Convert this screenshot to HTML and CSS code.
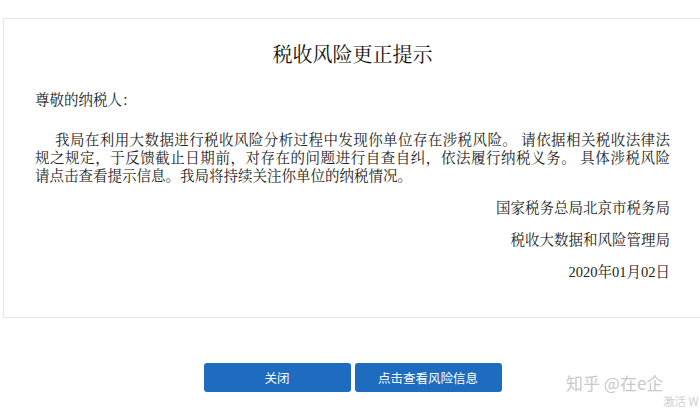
FILE: index.html
```html
<!DOCTYPE html>
<html lang="zh-CN">
<head>
<meta charset="utf-8">
<title>税收风险更正提示</title>
<link rel="stylesheet" href="styles.css">
</head>
<body>
<div class="page">
  <div class="card">
    <h1 class="title">税收风险更正提示</h1>
    <p class="greeting">尊敬的纳税人：</p>
    <div class="body">
      <span class="line line-first jline">我局在利用大数据进行税收风险分析过程中发现你单位存在涉税风险。 请依据相关税收法律法</span>
      <span class="line jline">规之规定，于反馈截止日期前，对存在的问题进行自查自纠，依法履行纳税义务。 具体涉税风险</span>
      <span class="line">请点击查看提示信息。我局将持续关注你单位的纳税情况。</span>
    </div>
    <p class="sign">国家税务总局北京市税务局</p>
    <p class="sign">税收大数据和风险管理局</p>
    <p class="sign">2020年01月02日</p>
  </div>
  <div class="actions">
    <button class="btn">关闭</button>
    <button class="btn">点击查看风险信息</button>
  </div>
  <div class="watermark">知乎 @在e企</div>
  <div class="activate">激活 W</div>
</div>
</body>
</html>
```
FILE: styles.css
```css
html, body {
  margin: 0;
  padding: 0;
  background: #fff;
  overflow: hidden;
}
body {
  font-family: "Liberation Serif", "Noto Serif CJK SC", "Source Han Serif SC", "Noto Sans CJK SC", serif;
  color: #222;
}
.page {
  position: relative;
  box-sizing: border-box;
  width: 700px;
  height: 413px;
  padding-top: 18px;
}
.card {
  margin-left: 3px;
  border: 1px solid #e4e4e4;
  border-right: none;
  padding: 23px 30px 36px 31px;
}
.title {
  margin: 0;
  font-size: 20px;
  font-weight: normal;
  line-height: 26px;
  text-align: center;
  color: #111;
}
.greeting {
  margin: 23px 0 0;
  font-size: 14.5px;
  line-height: 18px;
}
.body {
  margin-top: 22px;
  font-size: 14.5px;
  line-height: 18px;
}
.line {
  display: block;
}
.jline {
  text-align: justify;
  text-align-last: justify;
}
.line-first {
  padding-left: 20px;
}
.sign {
  margin: 14px 0 0;
  font-size: 14.5px;
  line-height: 18px;
  text-align: right;
}
.sign:first-of-type {
  margin-top: 16px;
}
.actions {
  display: flex;
  justify-content: center;
  gap: 4px;
  margin-top: 45px;
  padding-left: 5px;
}
.btn {
  width: 147px;
  height: 29px;
  border: none;
  border-radius: 3px;
  background: #1d6cc0;
  color: #fff;
  font-family: "Noto Sans CJK SC", sans-serif;
  font-size: 12.5px;
  padding: 0;
}
.watermark {
  position: absolute;
  left: 566px;
  top: 372px;
  font-family: "Noto Sans CJK SC", sans-serif;
  font-size: 17px;
  line-height: 22px;
  color: #c9c9c9;
  white-space: nowrap;
}
.activate {
  position: absolute;
  left: 663px;
  top: 393px;
  font-family: "Noto Sans CJK SC", sans-serif;
  font-size: 11.5px;
  line-height: 16px;
  color: #cfcfcf;
  white-space: nowrap;
}
```
